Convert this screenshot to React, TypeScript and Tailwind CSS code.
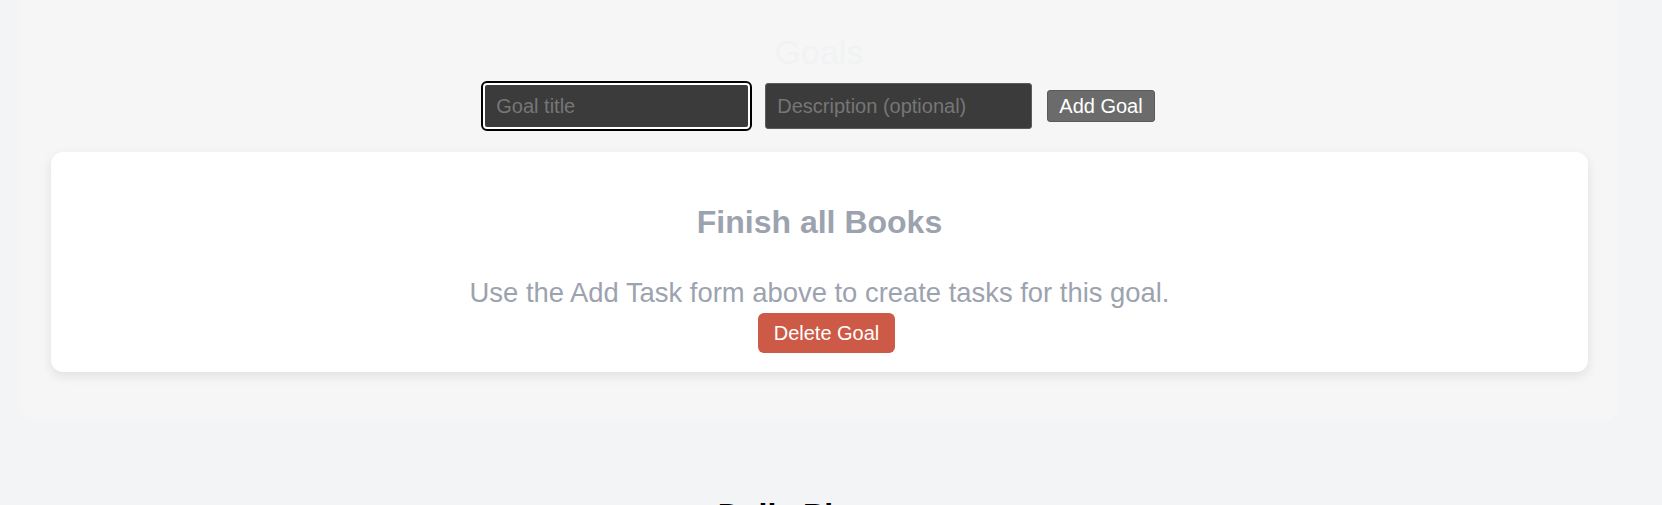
import { useState } from "react";

const font = "font-['Liberation_Sans',Arial,sans-serif]";

export default function App() {
  const [title, setTitle] = useState("");
  const [description, setDescription] = useState("");

  return (
    <div className={`h-[505px] overflow-hidden bg-[#f3f4f6] ${font}`}>
      {/* goals panel (top runs above the viewport) */}
      <section className="ml-[20px] w-[1598px] rounded-b-xl bg-[#f6f6f6] pt-[35px] pb-[48px]">
        <h2 className="text-center text-[34px] leading-[34px] text-[#f1f2f4]">Goals</h2>

        <form
          className="mt-[14px] flex items-center justify-center gap-[15px]"
          onSubmit={(e) => e.preventDefault()}
        >
          <input
            value={title}
            onChange={(e) => setTitle(e.target.value)}
            placeholder="Goal title"
            className="h-[46px] w-[267px] rounded-[4px] border-2 border-white bg-[#3b3b3b] px-[11px] text-[20px] text-white outline-2 outline-solid outline-black placeholder:text-[#767676]"
          />
          <input
            value={description}
            onChange={(e) => setDescription(e.target.value)}
            placeholder="Description (optional)"
            className="h-[46px] w-[267px] rounded-[3px] border border-[#5c5c5c] bg-[#3b3b3b] px-[11px] text-[20px] text-white outline-none placeholder:text-[#767676]"
          />
          <button
            type="submit"
            className="h-[32px] rounded-[3px] border border-[#5a5a5a] bg-[#6b6b6b] px-[11px] text-[20px] leading-[23px] text-white"
          >
            Add Goal
          </button>
        </form>

        <div className="mt-[23px] ml-[31px] mr-[30px] flex flex-col items-center rounded-xl bg-white pt-[52px] pb-[19px] shadow-[0_4px_12px_rgba(0,0,0,0.09)]">
          <h3 className="text-[32px] leading-[36px] font-bold text-[#9ca3af]">Finish all Books</h3>
          <p className="mt-[37px] text-[27.4px] leading-[31px] text-[#9ca3af]">
            Use the Add Task form above to create tasks for this goal.
          </p>
          <button className="mt-[5px] ml-[14px] h-[40px] rounded-[6px] bg-[#cd5a46] px-[16px] text-[20px] text-white">
            Delete Goal
          </button>
        </div>
      </section>

      <h2 className="mt-[77px] ml-[20px] w-[1598px] text-center text-[32px] leading-[37px] font-bold text-black">
        Daily Planner
      </h2>
    </div>
  );
}
